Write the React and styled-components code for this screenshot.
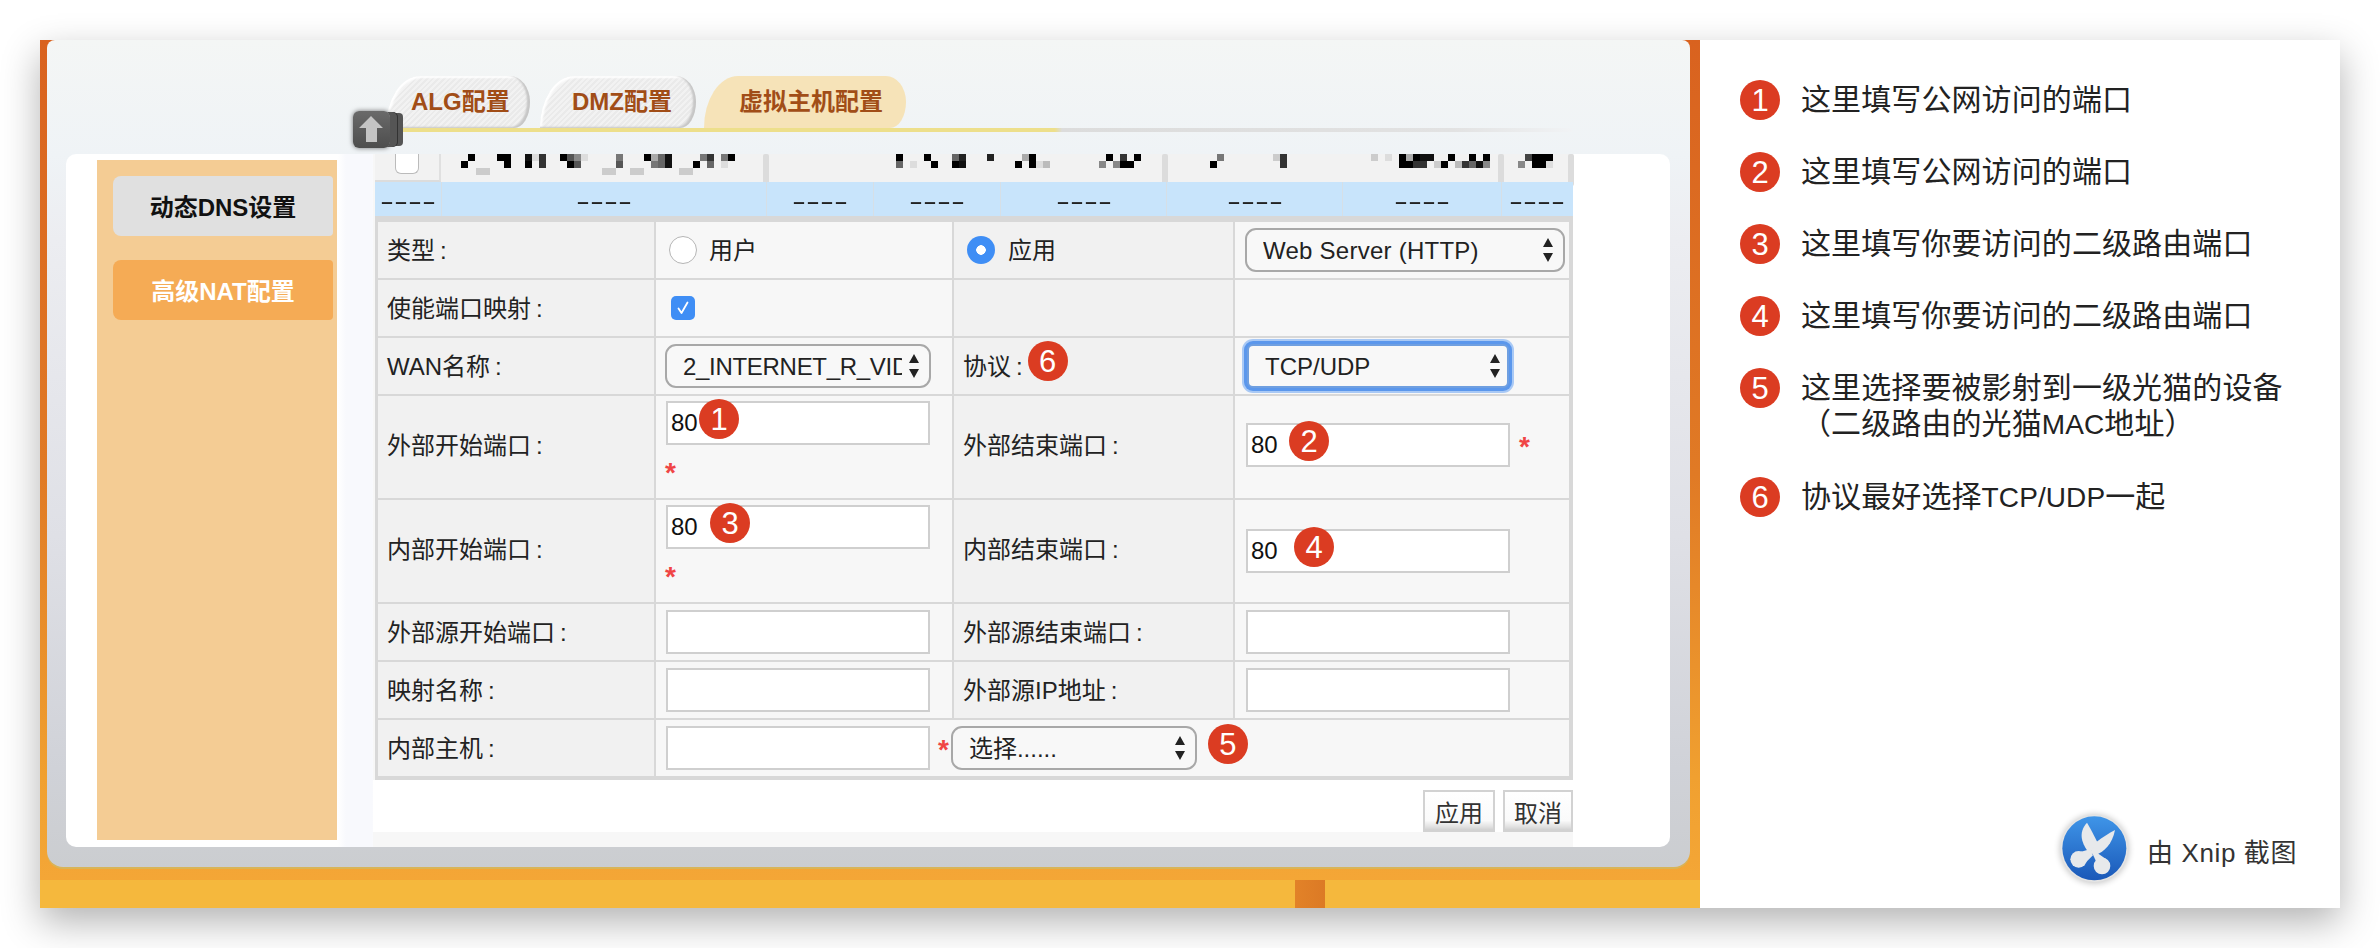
import React from "react";
import styled, { createGlobalStyle } from "styled-components";

const sans = `"Liberation Sans", "Noto Sans CJK SC", sans-serif`;

const Global = createGlobalStyle`
  html, body { margin: 0; padding: 0; background: #fff; }
  body { font-family: ${sans}; color: #222; overflow: hidden; }
  * { box-sizing: border-box; }
`;

const Page = styled.div`
  width: 2380px;
  height: 948px;
  padding: 40px;
`;
const Card = styled.div`
  display: flex;
  width: 2300px;
  height: 868px;
  background: #fff;
  box-shadow: 0 14px 36px rgba(0, 0, 0, 0.3);
`;

/* ---------- router screenshot ---------- */
const Shot = styled.div`
  position: relative;
  width: 1660px;
  display: flex;
  flex-direction: column;
  background: linear-gradient(#d9621f 0, #e07a25 50%, #f0a030 85%, #f5a838 100%);
`;
const Frame = styled.div`
  margin: 0 10px 0 7px;
  height: 827px;
  display: flex;
  flex-direction: column;
  border-radius: 8px 8px 16px 16px;
  background: linear-gradient(#f4f6f5 0, #eff3f6 115px, #ecedf1 200px, #dfe0e6 60%, #d0d2d8 88%, #cbcdd0 100%);
  box-shadow: 0 2px 0 #d8b458;
`;
const TabArea = styled.div`
  margin: 36px 0 0 339px;
  width: 1186px;
`;
const Tabs = styled.div`
  display: flex;
  height: 52px;
`;
const Tab = styled.div`
  display: flex;
  align-items: center;
  width: ${(p) => p.$width}px;
  margin-right: ${(p) => p.$gap || 0}px;
  padding-left: ${(p) => p.$pad}px;
  font-size: 24px;
  line-height: 24px;
  font-weight: 700;
  color: #a14d17;
  border-radius: 34px 20px 16px 0 / 52px 26px 26px 0;
  background: ${(p) =>
    p.$active
      ? "#f6e3b8"
      : "repeating-linear-gradient(135deg, #f2f2f2 0 2px, #eaeaea 2px 4px)"};
  box-shadow: ${(p) => (p.$active ? "none" : "inset -3px -1px 2px #c6c6c6, inset 2px 2px 2px #fff")};
`;
const TabLine = styled.div`
  height: 4px;
  background: linear-gradient(90deg, #eddf8b 0, #eddf8b 56.4%, #dcdcdc 57%, #e2e2e2 90%, #f1f3f5 100%);
`;
const ScrollTop = styled.div`
  position: absolute;
  left: 313px;
  top: 71px;
  width: 37px;
  height: 37px;
  display: flex;
  border-radius: 6px;
  background: linear-gradient(#6a6a6a, #4d4d4d);
  box-shadow: 8px 0 0 -1px #555, 9px 0 0 -1px #333, 15px 0 0 -2px #555, 0 0 5px rgba(0, 0, 0, 0.55);
  z-index: 2;
`;
const Panel = styled.div`
  flex: 1;
  margin: 22px 20px 20px 19px;
  display: flex;
  border-radius: 10px;
  background: linear-gradient(90deg, #fff 0, #fff 272px, #f8f9fd 280px, #f8f9fd 306px, #fff 310px, #fff 100%);
`;
const Sidebar = styled.div`
  width: 240px;
  margin: 6px 0 7px 31px;
  padding: 16px 4px 0 16px;
  display: flex;
  flex-direction: column;
  gap: 24px;
  background: #f4cc94;
`;
const SideItem = styled.div`
  height: 60px;
  padding-top: 3px;
  display: flex;
  align-items: center;
  justify-content: center;
  border-radius: 8px 4px 4px 8px;
  font-size: 24px;
  line-height: 24px;
  font-weight: 700;
  color: ${(p) => (p.$active ? "#fff" : "#111")};
  background: ${(p) => (p.$active ? "#f5ab55" : "#e0e0e0")};
`;
const Content = styled.div`
  width: 1200px;
  margin-left: 36px;
  padding-bottom: 15px;
  display: flex;
  flex-direction: column;
  background: #f7f7f7;
`;
const HeadRow = styled.div`
  display: flex;
  height: 28px;
  margin-left: 2px;
  background: #f2f2f2;
`;
const CheckCell = styled.div`
  width: 66px;
  display: flex;
  justify-content: center;
  border-right: 2px solid #e0e0e0;
  border-bottom: 2px solid #dcdcdc;
`;
const HeadCheck = styled.span`
  width: 24px;
  height: 20px;
  background: #fff;
  border: 1px solid #bbb;
  border-top: none;
  border-radius: 0 0 6px 6px;
`;
const Mosaic = styled.svg`
  display: block;
  overflow: visible;
`;
const DashRow = styled.div`
  display: grid;
  grid-template-columns: 66px 325px 107px 127px 166px 176px 159px 71px;
  height: 34px;
  margin-left: 2px;
  width: 1198px;
  background: #c8e4fb;
`;
const DashCell = styled.div`
  display: flex;
  align-items: center;
  justify-content: center;
  padding-top: 4px;
  border-left: ${(p) => (p.$first ? "none" : "1px solid #d6dfe6")};
`;
const Dash = styled.span`
  display: block;
  font-size: 24px;
  line-height: 24px;
  color: #222;
  transform: scaleX(1.75);
`;
const FormGrid = styled.div`
  display: grid;
  width: 1198px;
  margin-left: 2px;
  padding: 6px 4px 4px 3px;
  gap: 2px;
  grid-template-columns: 276px 296px 279px 334px;
  grid-template-rows: 56px 56px 56px 102px 102px 56px 56px 56px;
  background: #d8d8d8;
`;
const Cell = styled.div`
  display: flex;
  align-items: center;
  min-width: 0;
  padding-left: ${(p) => p.$pad ?? 10}px;
  padding-bottom: ${(p) => p.$lift || 0}px;
  font-size: 24px;
  line-height: 24px;
  background: ${(p) => (p.$shade ? "#f1f1f1" : "#f7f7f7")};
  grid-column: ${(p) => p.$span || "auto"};
`;
const LabelCell = styled(Cell)`
  padding-top: 1px;
`;
const OptionText = styled.span`
  margin-top: 1px;
`;
const Colon = styled.span`
  margin-left: 5px;
`;
const StackCell = styled(Cell)`
  flex-direction: column;
  align-items: flex-start;
  padding-top: 5px;
`;
const Radio = styled.span`
  flex: none;
  width: 28px;
  height: 28px;
  margin: 0 ${(p) => p.$gap}px 0 ${(p) => p.$left}px;
  border-radius: 50%;
  background: ${(p) =>
    p.$on
      ? "radial-gradient(circle, #fff 0 4.5px, #3f8ef5 5px)"
      : "#fff"};
  border: ${(p) => (p.$on ? "none" : "1px solid #b5b5b5")};
`;
const Check = styled.span`
  width: 24px;
  height: 24px;
  margin-left: 15px;
  display: flex;
  align-items: center;
  justify-content: center;
  border-radius: 5px;
  background: #3f8ef5;
`;
const arrows = encodeURIComponent(
  `<svg xmlns="http://www.w3.org/2000/svg" width="12" height="24"><path d="M6 0 11 9H1zM6 24 1 15h10z" fill="#222"/></svg>`
);
const Select = styled.select`
  appearance: none;
  flex: none;
  width: ${(p) => p.$width}px;
  height: 44px;
  margin: 0;
  padding: 0 ${(p) => p.$right || 30}px 0 16px;
  font: 24px ${sans};
  letter-spacing: ${(p) => p.$track || 0}px;
  color: #222;
  border: 2px solid #a8a8a8;
  border-radius: 11px;
  background: #f8f8f8 url("data:image/svg+xml,${arrows}") no-repeat right ${(p) => p.$arrow || 9}px center;
  outline: none;
  ${(p) =>
    p.$focus
      ? `border: 2px solid #6f9fe0; border-radius: 6px; box-shadow: 0 0 0 3px #5b97ec, 0 0 0 5px #a9c9f5;`
      : ""}
`;
const InputWrap = styled.div`
  position: relative;
  flex: none;
  width: 264px;
  height: 44px;
`;
const Input = styled.input`
  display: block;
  width: 100%;
  height: 100%;
  margin: 0;
  padding: 0 0 0 3px;
  font: 24px ${sans};
  color: #111;
  background: #fff;
  border: 2px solid #cfcfcf;
  outline: none;
`;
const Badge = styled.span`
  flex: none;
  display: flex;
  align-items: center;
  justify-content: center;
  width: 40px;
  height: 40px;
  border-radius: 50%;
  background: #db3c22;
  color: #fff;
  font-family: "Liberation Sans", sans-serif;
  font-size: 31px;
  line-height: 1;
`;
const InputBadge = styled(Badge)`
  position: absolute;
  top: -2px;
  left: ${(p) => p.$left}px;
`;
const LabelBadge = styled(Badge)`
  margin: 0 0 ${(p) => p.$lift || 8}px ${(p) => p.$left}px;
`;
const Star = styled.span`
  display: block;
  font-size: 28px;
  font-weight: 700;
  line-height: 24px;
  height: 24px;
  color: #f04545;
  margin: ${(p) => p.$m};
`;
const Actions = styled.div`
  height: 52px;
  padding-top: 10px;
  display: flex;
  justify-content: flex-end;
  gap: 8px;
  background: #fff;
`;
const Btn = styled.button`
  width: ${(p) => p.$width}px;
  height: 42px;
  margin: 0;
  padding: 0;
  font: 24px ${sans};
  color: #333;
  border: 2px solid #d2d2d2;
  background: linear-gradient(#fff 0, #fafafa 75%, #e0e0e0 92%, #d0d0d0 100%);
`;
const BottomBand = styled.div`
  margin-top: 13px;
  height: 28px;
  padding-left: 1255px;
  background: #f5b83d;
`;
const Marker = styled.div`
  width: 30px;
  height: 100%;
  background: linear-gradient(90deg, #e28228, #dc7a25);
`;

/* ---------- explanation panel ---------- */
const Notes = styled.div`
  flex: 1;
  display: flex;
  flex-direction: column;
  justify-content: space-between;
  padding: 40px 43px 8px 40px;
  background: #fff;
`;
const NoteList = styled.div`
  display: flex;
  flex-direction: column;
  gap: 32px;
`;
const Note = styled.div`
  display: flex;
  gap: 21px;
`;
const NoteText = styled.div`
  padding: 2px 0;
  font-size: 30px;
  line-height: 36px;
  letter-spacing: 0.1px;
  color: #222;
`;
const Latin = styled.span`
  font-size: 28px;
`;
const Credit = styled.div`
  display: flex;
  align-items: center;
  align-self: flex-end;
  margin-top: auto;
  font-size: 26px;
  letter-spacing: 0.6px;
  color: #333;
`;

const cells = [
  // [x, row, shade]
  [468,0,"#000"],[497,0,"#000"],[504,0,"#000"],[525,0,"#111"],[532,0,"#ddd"],[539,0,"#333"],[560,0,"#000"],[567,0,"#555"],[574,0,"#888"],[581,0,"#ddd"],[616,0,"#777"],[644,0,"#000"],[651,0,"#aaa"],[658,0,"#666"],[665,0,"#111"],[700,0,"#777"],[707,0,"#333"],[721,0,"#777"],[728,0,"#000"],
  [461,1,"#000"],[504,1,"#000"],[525,1,"#000"],[539,1,"#333"],[567,1,"#000"],[574,1,"#555"],[616,1,"#555"],[651,1,"#777"],[658,1,"#666"],[665,1,"#111"],[693,1,"#000"],[707,1,"#666"],[721,1,"#ddd"],
  [476,2,"#ccc"],[483,2,"#ccc"],[602,2,"#ccc"],[609,2,"#ccc"],[630,2,"#ccc"],[637,2,"#ccc"],[679,2,"#ccc"],[686,2,"#ccc"],
  [896,0,"#000"],[924,0,"#000"],[952,0,"#666"],[959,0,"#222"],[987,0,"#222"],[1022,0,"#aaa"],[1029,0,"#000"],[1106,0,"#000"],[1120,0,"#333"],[1134,0,"#000"],
  [896,1,"#666"],[910,1,"#ddd"],[931,1,"#000"],[952,1,"#000"],[959,1,"#111"],[1015,1,"#000"],[1029,1,"#000"],[1036,1,"#ddd"],[1043,1,"#bbb"],[1099,1,"#888"],[1113,1,"#888"],[1120,1,"#000"],[1127,1,"#000"],
  [1217,0,"#777"],[1273,0,"#ccc"],[1280,0,"#333"],[1371,0,"#ccc"],[1385,0,"#ddd"],[1399,0,"#000"],[1406,0,"#aaa"],[1413,0,"#000"],[1420,0,"#111"],[1427,0,"#111"],[1448,0,"#000"],[1469,0,"#000"],[1483,0,"#000"],[1525,0,"#444"],[1532,0,"#000"],[1539,0,"#000"],[1546,0,"#000"],
  [1210,1,"#000"],[1280,1,"#333"],[1399,1,"#000"],[1406,1,"#000"],[1413,1,"#333"],[1420,1,"#333"],[1434,1,"#ccc"],[1441,1,"#000"],[1455,1,"#bbb"],[1462,1,"#333"],[1469,1,"#666"],[1476,1,"#111"],[1483,1,"#888"],[1518,1,"#888"],[1532,1,"#000"],[1539,1,"#000"],[1546,1,"#ddd"],
];

function HeadMosaic() {
  return (
    <Mosaic width="1132" height="28" viewBox="441 154 1132 28" aria-hidden="true">
      {cells.map(([x, r, c], i) => (
        <rect key={i} x={x} y={154 + r * 7} width="7" height="7" fill={c} />
      ))}
      {[763, 1162, 1498, 1568].map((x) => (
        <rect key={x} x={x} y="154" width="6" height="32" rx="2" fill="#dcdcdc" />
      ))}
    </Mosaic>
  );
}

const CheckMark = () => (
  <svg width="14" height="16" viewBox="0 0 14 16" aria-hidden="true">
    <path d="M2.5 8.5 5.5 13 11.5 2.5" fill="none" stroke="#fff" strokeWidth="1.8" strokeLinecap="round" strokeLinejoin="round" />
  </svg>
);
const UpArrow = () => (
  <svg width="37" height="37" viewBox="0 0 37 37" aria-hidden="true">
    <path d="M18 5 30 17H24V31H13V17H6Z" fill="#c4c4c4" />
  </svg>
);
const XnipLogo = () => (
  <svg width="100" height="100" viewBox="0 0 300 300" aria-hidden="true">
    <defs>
      <linearGradient id="xn" x1="0" y1="0" x2="0" y2="1">
        <stop offset="0" stopColor="#3f95e8" />
        <stop offset="1" stopColor="#1a58b8" />
      </linearGradient>
      <filter id="xs" x="-30%" y="-30%" width="160%" height="160%">
        <feGaussianBlur stdDeviation="9" />
      </filter>
    </defs>
    <circle cx="142" cy="147" r="104" fill="#000" opacity="0.22" filter="url(#xs)" />
    <circle cx="142" cy="145" r="101" fill="#e4e4e4" />
    <circle cx="142" cy="145" r="96" fill="url(#xn)" />
    <g fill="#e7e9eb">
      <path d="M120 68C107 82 100 100 106 122 111 138 118 150 128 160L152 128C142 108 131 86 120 68Z" />
      <path d="M204 90C186 100 166 112 149 125L128 158 146 165C172 155 196 132 204 90Z" />
      <path d="M100 156 128 148 138 166 114 190Z" />
      <path d="M136 160 152 160 178 178 148 186Z" />
      <circle cx="95" cy="178" r="25" />
      <circle cx="165" cy="198" r="25" />
    </g>
  </svg>
);

const Label = ({ text, lift }) => (
  <LabelCell $shade $pad={9} $lift={lift}>
    {text}
    <Colon>:</Colon>
  </LabelCell>
);

const Row = ({ label, lift, children }) => (
  <>
    <Label text={label} lift={lift} />
    {children}
  </>
);

const notes = [
  ["1", "这里填写公网访问的端口"],
  ["2", "这里填写公网访问的端口"],
  ["3", "这里填写你要访问的二级路由端口"],
  ["4", "这里填写你要访问的二级路由端口"],
  ["5", <>这里选择要被影射到一级光猫的设备<br />（二级路由的光猫<Latin>MAC</Latin>地址）</>],
  ["6", <>协议最好选择<Latin>TCP/UDP</Latin>一起</>],
];
const dashColumns = [0, 1, 2, 3, 4, 5, 6, 7];

export default function App() {
  return (
    <Page>
      <Global />
      <Card>
        <Shot>
          <ScrollTop><UpArrow /></ScrollTop>
          <Frame>
            <TabArea>
              <Tabs>
                <Tab $width={144} $gap={10} $pad={25}>ALG配置</Tab>
                <Tab $width={156} $gap={8} $pad={32}>DMZ配置</Tab>
                <Tab $width={202} $pad={35} $active>虚拟主机配置</Tab>
              </Tabs>
              <TabLine />
            </TabArea>
            <Panel>
              <Sidebar>
                <SideItem>动态DNS设置</SideItem>
                <SideItem $active>高级NAT配置</SideItem>
              </Sidebar>
              <Content>
                <HeadRow>
                  <CheckCell><HeadCheck /></CheckCell>
                  <HeadMosaic />
                </HeadRow>
                <DashRow>
                  {dashColumns.map((i) => (
                    <DashCell key={i} $first={i === 0}><Dash>----</Dash></DashCell>
                  ))}
                </DashRow>
                <FormGrid>
                  <Row label="类型">
                    <Cell $pad={0}><Radio $left={13} $gap={12} /><OptionText>用户</OptionText></Cell>
                    <Cell $shade $pad={0}><Radio $left={13} $gap={13} $on /><OptionText>应用</OptionText></Cell>
                    <Cell>
                      <Select $width={320} defaultValue="http" $arrow={9} $track={0.25}>
                        <option value="http">Web Server (HTTP)</option>
                      </Select>
                    </Cell>
                  </Row>
                  <Row label="使能端口映射">
                    <Cell $pad={0}><Check><CheckMark /></Check></Cell>
                    <Cell $shade />
                    <Cell />
                  </Row>
                  <Row label="WAN名称">
                    <Cell $pad={9}>
                      <Select $width={266} $right={27} $track={-0.3}>
                        <option>2_INTERNET_R_VID_8</option>
                      </Select>
                    </Cell>
                    <LabelCell $shade $pad={9}>协议<Colon>:</Colon><LabelBadge $left={5} $lift={11}>6</LabelBadge></LabelCell>
                    <Cell $pad={12}>
                      <Select $width={262} $focus $arrow={6}>
                        <option>TCP/UDP</option>
                      </Select>
                    </Cell>
                  </Row>
                  <Row label="外部开始端口" lift={4}>
                    <StackCell>
                      <InputWrap>
                        <Input defaultValue="80" />
                        <InputBadge $left={33}>1</InputBadge>
                      </InputWrap>
                      <Star $m="16px 0 0 -1px">*</Star>
                    </StackCell>
                    <Label text="外部结束端口" lift={4} />
                    <Cell $pad={11} $lift={4}>
                      <InputWrap>
                        <Input defaultValue="80" />
                        <InputBadge $left={43}>2</InputBadge>
                      </InputWrap>
                      <Star $m="4px 0 0 9px">*</Star>
                    </Cell>
                  </Row>
                  <Row label="内部开始端口" lift={4}>
                    <StackCell>
                      <InputWrap>
                        <Input defaultValue="80" />
                        <InputBadge $left={44}>3</InputBadge>
                      </InputWrap>
                      <Star $m="16px 0 0 -1px">*</Star>
                    </StackCell>
                    <Label text="内部结束端口" lift={4} />
                    <Cell $pad={11}>
                      <InputWrap>
                        <Input defaultValue="80" />
                        <InputBadge $left={48}>4</InputBadge>
                      </InputWrap>
                    </Cell>
                  </Row>
                  <Row label="外部源开始端口">
                    <Cell><InputWrap><Input /></InputWrap></Cell>
                    <Label text="外部源结束端口" />
                    <Cell $pad={11}><InputWrap><Input /></InputWrap></Cell>
                  </Row>
                  <Row label="映射名称">
                    <Cell><InputWrap><Input /></InputWrap></Cell>
                    <Label text="外部源IP地址" />
                    <Cell $pad={11}><InputWrap><Input /></InputWrap></Cell>
                  </Row>
                  <Row label="内部主机">
                    <Cell $span="span 3">
                      <InputWrap><Input /></InputWrap>
                      <Star $m="4px 2px 0 8px">*</Star>
                      <Select $width={246}>
                        <option>选择......</option>
                      </Select>
                      <LabelBadge $left={11}>5</LabelBadge>
                    </Cell>
                  </Row>
                </FormGrid>
                <Actions>
                  <Btn $width={72}>应用</Btn>
                  <Btn $width={70}>取消</Btn>
                </Actions>
              </Content>
            </Panel>
          </Frame>
          <BottomBand><Marker /></BottomBand>
        </Shot>
        <Notes>
          <NoteList>
            {notes.map(([n, t]) => (
              <Note key={n}>
                <Badge>{n}</Badge>
                <NoteText>{t}</NoteText>
              </Note>
            ))}
          </NoteList>
          <Credit>
            <XnipLogo />
            由 Xnip 截图
          </Credit>
        </Notes>
      </Card>
    </Page>
  );
}
